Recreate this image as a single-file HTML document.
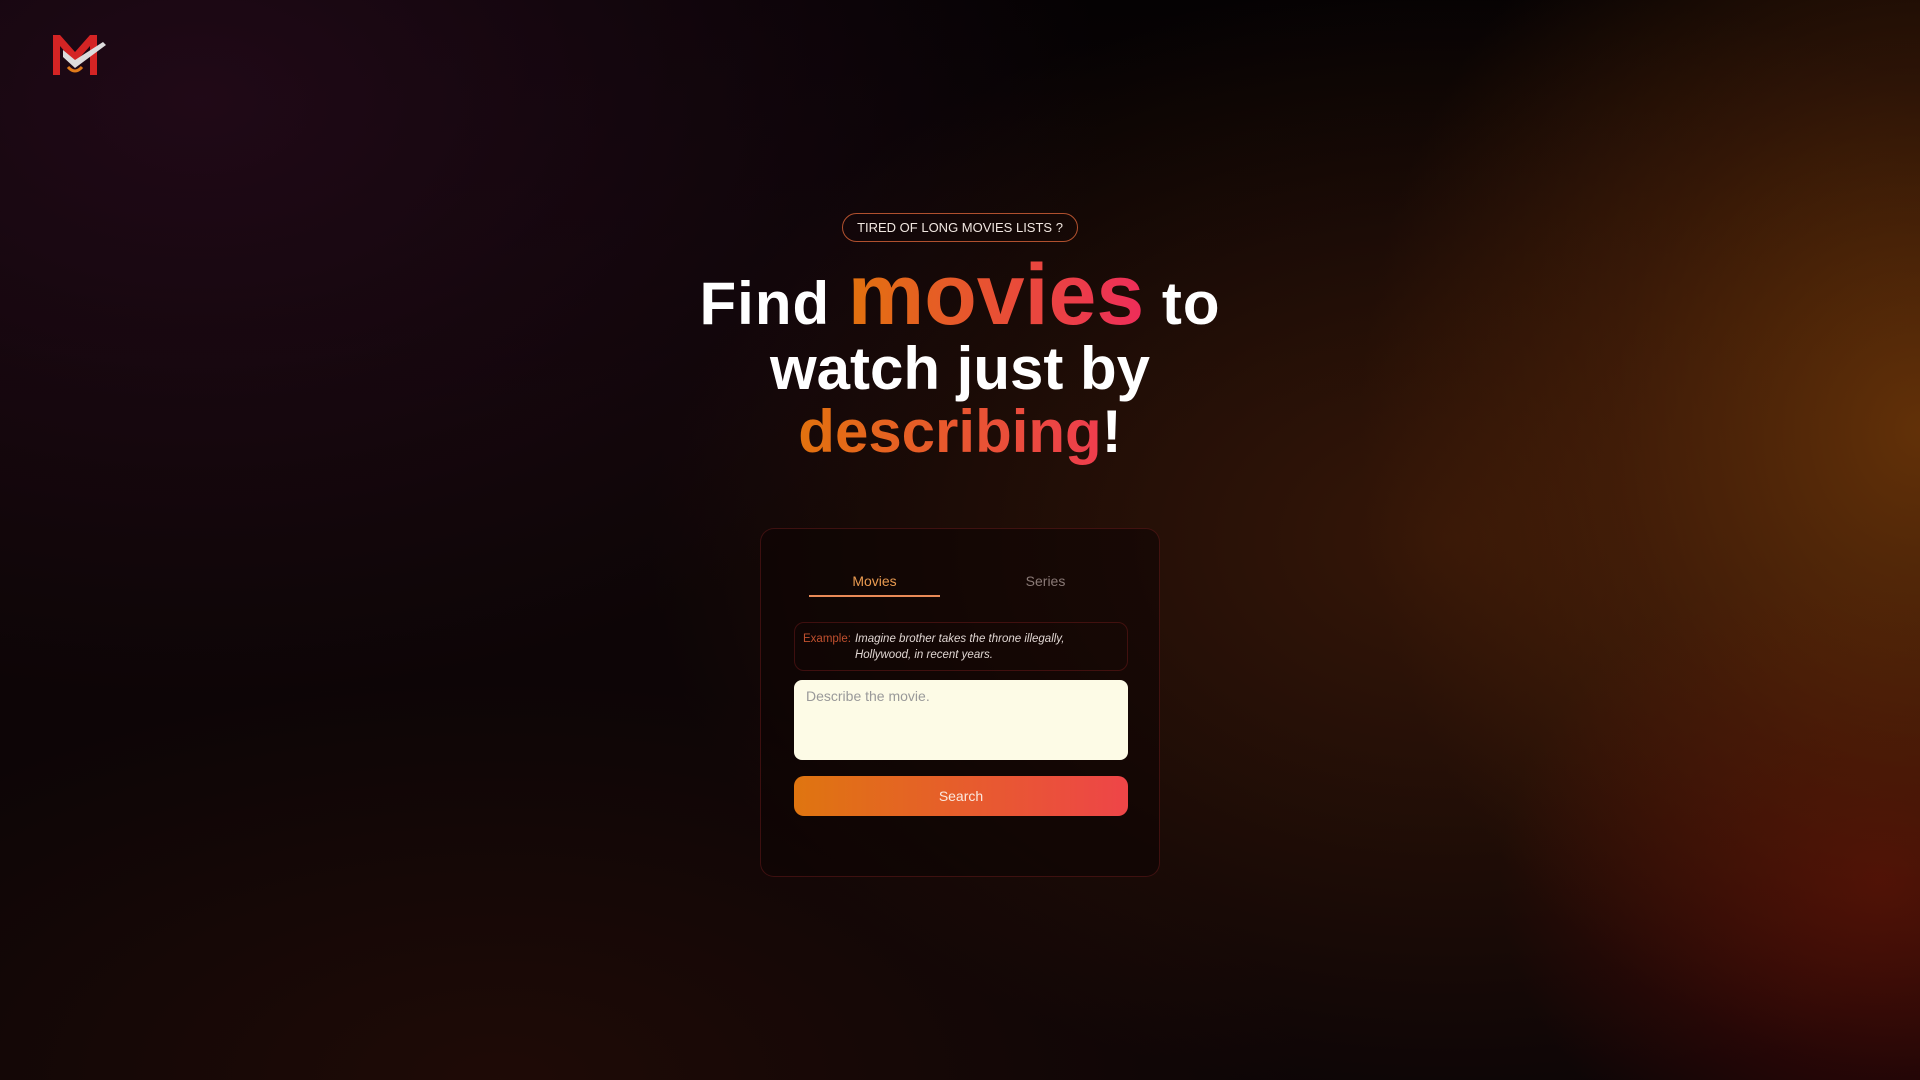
<!DOCTYPE html>
<html><head><meta charset="utf-8"><style>
*{margin:0;padding:0;box-sizing:border-box}
html,body{width:1920px;height:1080px;overflow:hidden}
body{font-family:"Liberation Sans",sans-serif;position:relative;
background:
radial-gradient(ellipse 560px 640px at 1920px 430px,rgba(110,55,8,.85),rgba(90,40,8,.45) 55%,rgba(0,0,0,0) 100%),
radial-gradient(ellipse 380px 320px at 1880px 880px,rgba(90,10,5,.8),rgba(0,0,0,0) 100%),
radial-gradient(ellipse 800px 560px at 1450px 540px,rgba(80,34,8,.6),rgba(0,0,0,0) 100%),
radial-gradient(ellipse 900px 600px at 200px 100px,rgba(35,10,25,.9),rgba(0,0,0,0) 100%),
radial-gradient(ellipse 800px 400px at 500px 1080px,rgba(35,12,6,.8),rgba(0,0,0,0) 100%),
linear-gradient(180deg,#050203,#0d0506 40%);}
.logo{position:absolute;left:50px;top:32px}
.badge{position:absolute;left:842px;top:213px;width:236px;height:29px;border:1px solid #b0502e;border-radius:15px;color:#f0e6e0;font-size:13px;text-align:center;line-height:27px}
.h{position:absolute;left:0;width:1920px;text-align:center;color:#fff;font-weight:bold;white-space:nowrap}
.g1{background:linear-gradient(90deg,#e2720e,#ee2d5a);-webkit-background-clip:text;background-clip:text;color:transparent}
.g2{background:linear-gradient(90deg,#e2720e,#ee3d4e);-webkit-background-clip:text;background-clip:text;color:transparent}
.card{position:absolute;left:760px;top:528px;width:400px;height:349px;border:1px solid rgba(120,30,30,.45);border-radius:14px;background:rgba(12,4,4,.55)}
.tab{position:absolute;top:44px;font-size:14px}
.ul{position:absolute;left:48px;top:66px;width:131px;height:2px;background:#e98a57}
.ex{position:absolute;left:33px;top:93px;width:334px;height:49px;border:1px solid rgba(110,25,25,.5);border-radius:10px;font-size:11.5px;line-height:16px;padding:8px 0 0 8px}
.ta{position:absolute;left:33px;top:151px;width:334px;height:80px;background:#fdfbe6;border-radius:8px;color:#999;font-size:14px;padding:8px 12px}
.btn{position:absolute;left:33px;top:247px;width:334px;height:40px;border-radius:10px;background:linear-gradient(90deg,#df7510,#ee4548);color:#fbe8de;font-size:14px;text-align:center;line-height:40px}
</style></head><body>
<svg class="logo" width="60" height="48" viewBox="50 32 60 48">
<polygon points="53,35 60,35 75,52 90,35 97,35 97,75 90,75 90,46 75,63 60,46 60,75 53,75" fill="#d42424"/>
<polygon points="63,50 75,60 103,42 106,45 75,68 63,57" fill="#dcdcdc"/>
<path d="M68,67 Q75,75 82,67" stroke="#e07a1a" stroke-width="3" fill="none"/>
</svg>
<div class="badge">TIRED OF LONG MOVIES LISTS ?</div>
<div class="h" style="top:250px;font-size:60px;line-height:90px;height:90px;letter-spacing:1px"><span>Find </span><span class="g1" style="font-size:86px;letter-spacing:0">movies</span><span> to</span></div>
<div class="h" style="top:337px;font-size:60px;line-height:64px">watch just by</div>
<div class="h" style="top:400px;font-size:60px;line-height:64px"><span class="g2">describing</span>!</div>
<div class="card">
<div class="tab" style="left:48px;width:131px;text-align:center;color:#e99a50">Movies</div>
<div class="tab" style="left:219px;width:131px;text-align:center;color:#8a7a76">Series</div>
<div class="ul"></div>
<div class="ex"><span style="color:#c0502e;float:left;margin-right:4px">Example:</span><i style="color:#e0d6d2;display:block;overflow:hidden">Imagine brother takes the throne illegally,<br>Hollywood, in recent years.</i></div>
<div class="ta">Describe the movie.</div>
<div class="btn">Search</div>
</div>
</body></html>
